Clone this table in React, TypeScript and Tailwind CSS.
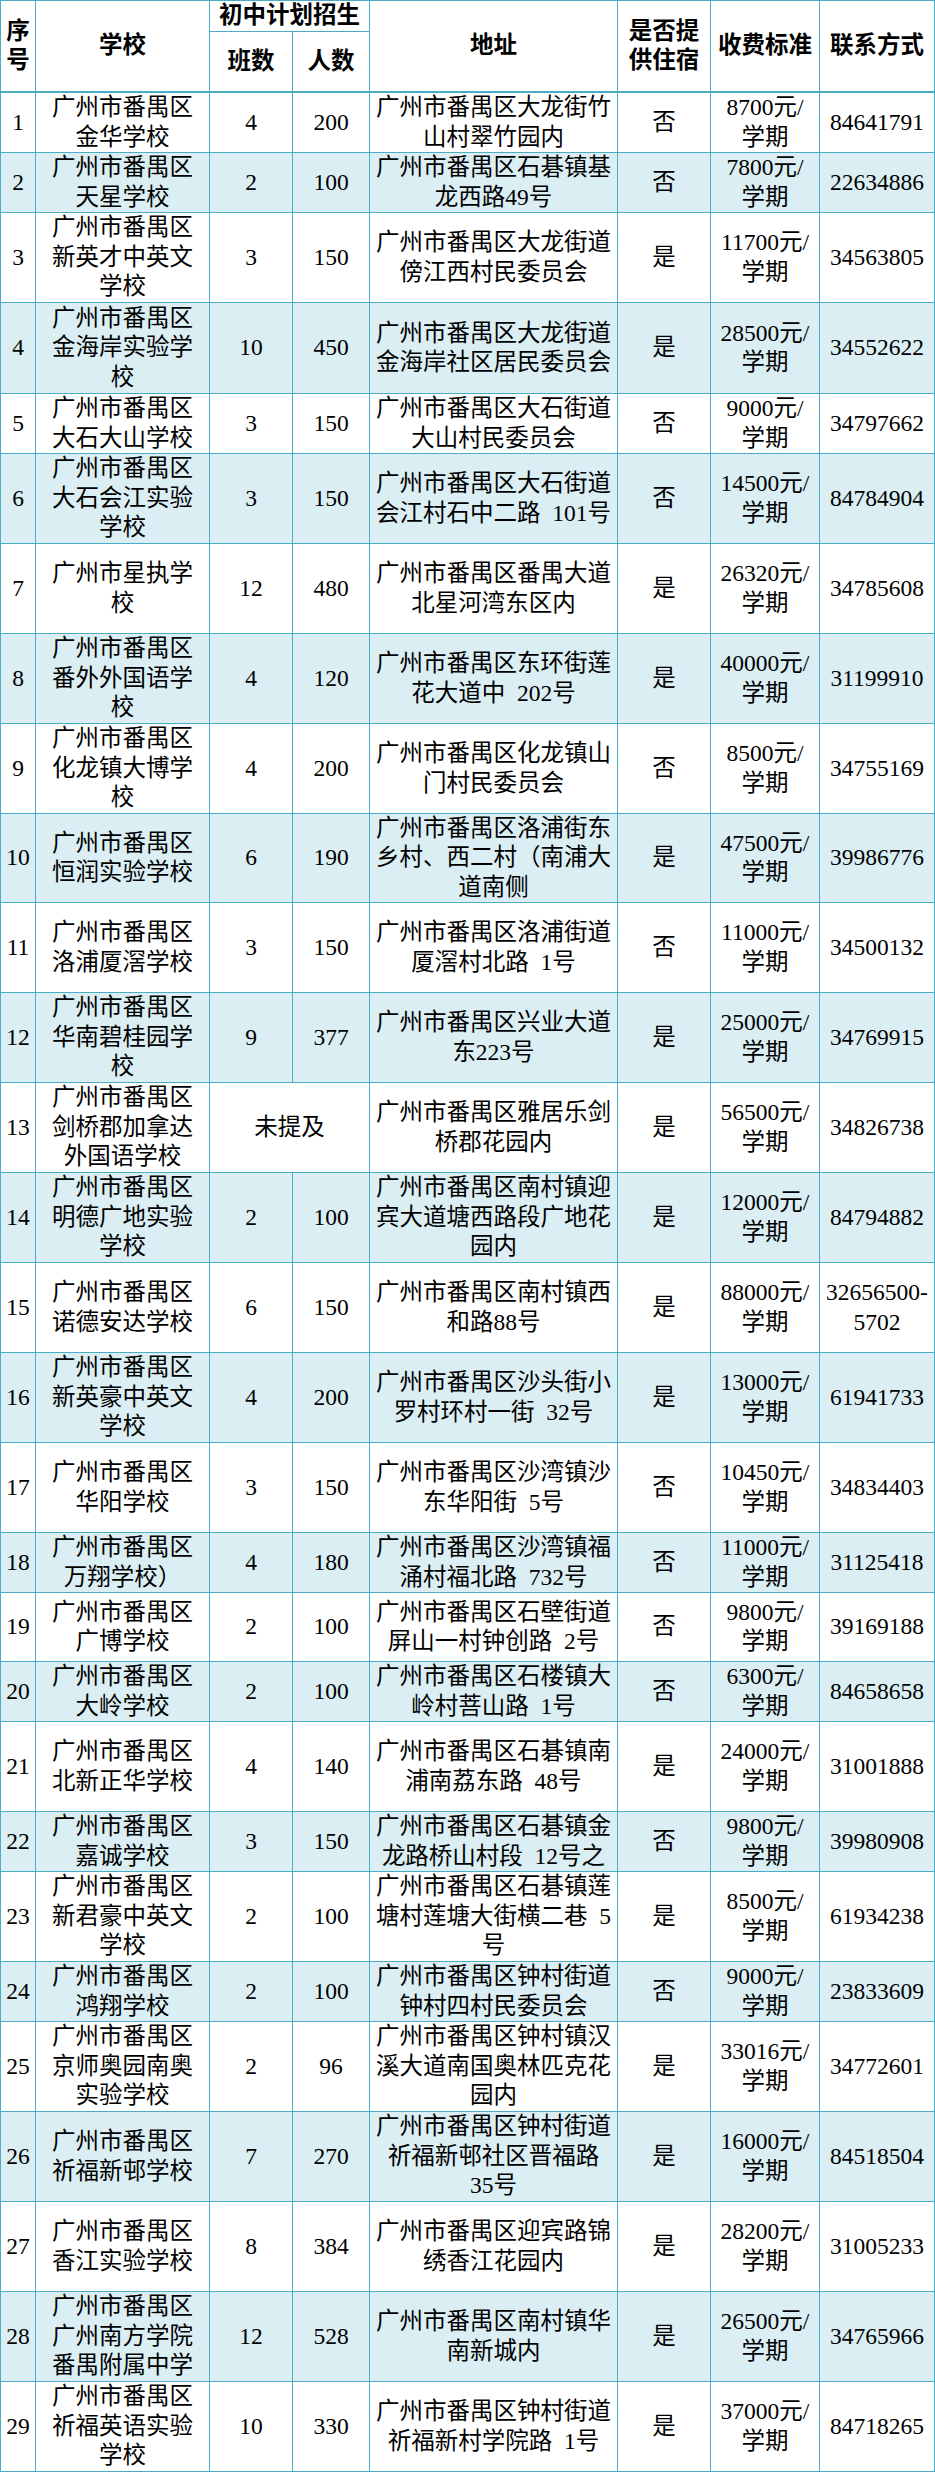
import React from "react";

type School = {
  no: string;
  name: string;
  classes: string;
  students: string;
  address: string;
  dorm: string;
  fee: string;
  phone: string;
  h: string;
};

// 番禺区民办初中招生表
const rows: School[] = [
  { no: "1", name: "广州市番禺区\n金华学校", classes: "4", students: "200", address: "广州市番禺区大龙街竹\n山村翠竹园内", dorm: "否", fee: "8700元/\n学期", phone: "84641791", h: "h-[59px]" },
  { no: "2", name: "广州市番禺区\n天星学校", classes: "2", students: "100", address: "广州市番禺区石碁镇基\n龙西路49号", dorm: "否", fee: "7800元/\n学期", phone: "22634886", h: "h-[59px]" },
  { no: "3", name: "广州市番禺区\n新英才中英文\n学校", classes: "3", students: "150", address: "广州市番禺区大龙街道\n傍江西村民委员会", dorm: "是", fee: "11700元/\n学期", phone: "34563805", h: "h-[89px]" },
  { no: "4", name: "广州市番禺区\n金海岸实验学\n校", classes: "10", students: "450", address: "广州市番禺区大龙街道\n金海岸社区居民委员会", dorm: "是", fee: "28500元/\n学期", phone: "34552622", h: "h-[90px]" },
  { no: "5", name: "广州市番禺区\n大石大山学校", classes: "3", students: "150", address: "广州市番禺区大石街道\n大山村民委员会", dorm: "否", fee: "9000元/\n学期", phone: "34797662", h: "h-[59px]" },
  { no: "6", name: "广州市番禺区\n大石会江实验\n学校", classes: "3", students: "150", address: "广州市番禺区大石街道\n会江村石中二路 101号", dorm: "否", fee: "14500元/\n学期", phone: "84784904", h: "h-[89px]" },
  { no: "7", name: "广州市星执学\n校", classes: "12", students: "480", address: "广州市番禺区番禺大道\n北星河湾东区内", dorm: "是", fee: "26320元/\n学期", phone: "34785608", h: "h-[89px]" },
  { no: "8", name: "广州市番禺区\n番外外国语学\n校", classes: "4", students: "120", address: "广州市番禺区东环街莲\n花大道中 202号", dorm: "是", fee: "40000元/\n学期", phone: "31199910", h: "h-[89px]" },
  { no: "9", name: "广州市番禺区\n化龙镇大博学\n校", classes: "4", students: "200", address: "广州市番禺区化龙镇山\n门村民委员会", dorm: "否", fee: "8500元/\n学期", phone: "34755169", h: "h-[89px]" },
  { no: "10", name: "广州市番禺区\n恒润实验学校", classes: "6", students: "190", address: "广州市番禺区洛浦街东\n乡村、西二村（南浦大\n道南侧", dorm: "是", fee: "47500元/\n学期", phone: "39986776", h: "h-[88px]" },
  { no: "11", name: "广州市番禺区\n洛浦厦滘学校", classes: "3", students: "150", address: "广州市番禺区洛浦街道\n厦滘村北路 1号", dorm: "否", fee: "11000元/\n学期", phone: "34500132", h: "h-[89px]" },
  { no: "12", name: "广州市番禺区\n华南碧桂园学\n校", classes: "9", students: "377", address: "广州市番禺区兴业大道\n东223号", dorm: "是", fee: "25000元/\n学期", phone: "34769915", h: "h-[89px]" },
  { no: "13", name: "广州市番禺区\n剑桥郡加拿达\n外国语学校", classes: "", students: "", address: "广州市番禺区雅居乐剑\n桥郡花园内", dorm: "是", fee: "56500元/\n学期", phone: "34826738", h: "h-[89px]" },
  { no: "14", name: "广州市番禺区\n明德广地实验\n学校", classes: "2", students: "100", address: "广州市番禺区南村镇迎\n宾大道塘西路段广地花\n园内", dorm: "是", fee: "12000元/\n学期", phone: "84794882", h: "h-[89px]" },
  { no: "15", name: "广州市番禺区\n诺德安达学校", classes: "6", students: "150", address: "广州市番禺区南村镇西\n和路88号", dorm: "是", fee: "88000元/\n学期", phone: "32656500-\n5702", h: "h-[89px]" },
  { no: "16", name: "广州市番禺区\n新英豪中英文\n学校", classes: "4", students: "200", address: "广州市番禺区沙头街小\n罗村环村一街 32号", dorm: "是", fee: "13000元/\n学期", phone: "61941733", h: "h-[89px]" },
  { no: "17", name: "广州市番禺区\n华阳学校", classes: "3", students: "150", address: "广州市番禺区沙湾镇沙\n东华阳街 5号", dorm: "否", fee: "10450元/\n学期", phone: "34834403", h: "h-[89px]" },
  { no: "18", name: "广州市番禺区\n万翔学校）", classes: "4", students: "180", address: "广州市番禺区沙湾镇福\n涌村福北路 732号", dorm: "否", fee: "11000元/\n学期", phone: "31125418", h: "h-[59px]" },
  { no: "19", name: "广州市番禺区\n广博学校", classes: "2", students: "100", address: "广州市番禺区石壁街道\n屏山一村钟创路 2号", dorm: "否", fee: "9800元/\n学期", phone: "39169188", h: "h-[68px]" },
  { no: "20", name: "广州市番禺区\n大岭学校", classes: "2", students: "100", address: "广州市番禺区石楼镇大\n岭村菩山路 1号", dorm: "否", fee: "6300元/\n学期", phone: "84658658", h: "h-[59px]" },
  { no: "21", name: "广州市番禺区\n北新正华学校", classes: "4", students: "140", address: "广州市番禺区石碁镇南\n浦南荔东路 48号", dorm: "是", fee: "24000元/\n学期", phone: "31001888", h: "h-[89px]" },
  { no: "22", name: "广州市番禺区\n嘉诚学校", classes: "3", students: "150", address: "广州市番禺区石碁镇金\n龙路桥山村段 12号之", dorm: "否", fee: "9800元/\n学期", phone: "39980908", h: "h-[59px]" },
  { no: "23", name: "广州市番禺区\n新君豪中英文\n学校", classes: "2", students: "100", address: "广州市番禺区石碁镇莲\n塘村莲塘大街横二巷 5\n号", dorm: "是", fee: "8500元/\n学期", phone: "61934238", h: "h-[89px]" },
  { no: "24", name: "广州市番禺区\n鸿翔学校", classes: "2", students: "100", address: "广州市番禺区钟村街道\n钟村四村民委员会", dorm: "否", fee: "9000元/\n学期", phone: "23833609", h: "h-[59px]" },
  { no: "25", name: "广州市番禺区\n京师奥园南奥\n实验学校", classes: "2", students: "96", address: "广州市番禺区钟村镇汉\n溪大道南国奥林匹克花\n园内", dorm: "是", fee: "33016元/\n学期", phone: "34772601", h: "h-[89px]" },
  { no: "26", name: "广州市番禺区\n祈福新邨学校", classes: "7", students: "270", address: "广州市番禺区钟村街道\n祈福新邨社区晋福路\n35号", dorm: "是", fee: "16000元/\n学期", phone: "84518504", h: "h-[89px]" },
  { no: "27", name: "广州市番禺区\n香江实验学校", classes: "8", students: "384", address: "广州市番禺区迎宾路锦\n绣香江花园内", dorm: "是", fee: "28200元/\n学期", phone: "31005233", h: "h-[89px]" },
  { no: "28", name: "广州市番禺区\n广州南方学院\n番禺附属中学", classes: "12", students: "528", address: "广州市番禺区南村镇华\n南新城内", dorm: "是", fee: "26500元/\n学期", phone: "34765966", h: "h-[89px]" },
  { no: "29", name: "广州市番禺区\n祈福英语实验\n学校", classes: "10", students: "330", address: "广州市番禺区钟村街道\n祈福新村学院路 1号", dorm: "是", fee: "37000元/\n学期", phone: "84718265", h: "h-[89px]" },
];

function Cell({ text, className = "" }: { text: string; className?: string }) {
  return (
    <div className={`flex flex-col items-center justify-center text-center whitespace-nowrap leading-[29.5px] ${className}`}>
      {text.split("\n").map((line, i) => (
        // 原表用宋体，空格是半角宽，这里换成 en space
        <div key={i}>{line.replace(/ /g, "\u2002")}</div>
      ))}
    </div>
  );
}

export default function App() {
  return (
    <div
      className="w-[935px] bg-white text-black text-[23.5px]"
      style={{ fontFamily: '"Liberation Serif", "Noto Sans CJK SC", serif' }}
    >
      <div className="grid grid-cols-[34px_173px_82px_76px_247px_92px_108px_114px] gap-px bg-[#4bacc6] p-px">
        {/* 表头 */}
        <Cell text={"序\n号"} className="row-span-2 mb-px bg-white font-bold" />
        <Cell text="学校" className="row-span-2 mb-px bg-white font-bold" />
        <Cell text="初中计划招生" className="col-span-2 h-[30px] bg-white font-bold" />
        <Cell text="地址" className="row-span-2 mb-px bg-white font-bold" />
        <Cell text={"是否提\n供住宿"} className="row-span-2 mb-px bg-white font-bold" />
        <Cell text="收费标准" className="row-span-2 mb-px bg-white font-bold" />
        <Cell text="联系方式" className="row-span-2 mb-px bg-white font-bold" />
        <Cell text="班数" className="h-[59px] mb-px bg-white font-bold" />
        <Cell text="人数" className="h-[59px] mb-px bg-white font-bold" />

        {rows.map((r, i) => {
          const bg = i % 2 === 1 ? "bg-[#daeef3]" : "bg-white";
          const base = `${bg} ${r.h}`;
          return (
            <React.Fragment key={r.no}>
              <Cell text={r.no} className={base} />
              <Cell text={r.name} className={base} />
              {r.classes === "" ? (
                <Cell text="未提及" className={`col-span-2 ${base}`} />
              ) : (
                <>
                  <Cell text={r.classes} className={base} />
                  <Cell text={r.students} className={base} />
                </>
              )}
              <Cell text={r.address} className={base} />
              <Cell text={r.dorm} className={base} />
              <Cell text={r.fee} className={base} />
              <Cell text={r.phone} className={base} />
            </React.Fragment>
          );
        })}
      </div>
    </div>
  );
}
